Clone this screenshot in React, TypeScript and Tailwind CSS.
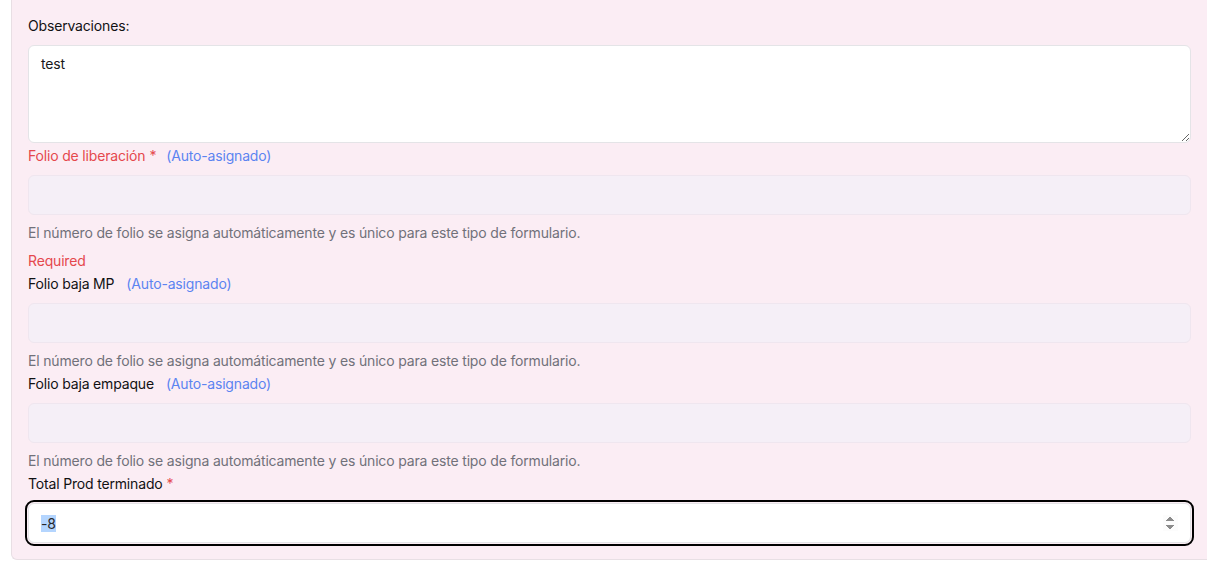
import React, { useEffect, useRef } from "react";

const font = { fontFamily: "Inter, 'Noto Sans', sans-serif", letterSpacing: "-0.17px" };

function HelpText() {
  return (
    <p className="text-sm leading-5 text-[#71717a]">
      El número de folio se asigna automáticamente y es único para este tipo de formulario.
    </p>
  );
}

function AutoField({
  label,
  required,
  error,
  showError,
}: {
  label: string;
  required?: boolean;
  error?: boolean;
  showError?: boolean;
}) {
  return (
    <div className="flex flex-col">
      <div className={`text-sm leading-5 ${error ? "text-[#e5484d]" : "text-[#111113]"}`}>
        {label}
        {required && <span className="ml-1 text-[#e5484d]">*</span>}
        <span className={`${required ? "ml-[10px]" : "ml-[12px]"} text-[#5b84f1]`}>(Auto-asignado)</span>
      </div>
      <input
        readOnly
        className="mt-[9px] h-10 w-full rounded-md border border-[#efe6ef] bg-[#f5eff7] px-3 text-sm outline-none"
      />
      <div className="mt-2">
        <HelpText />
      </div>
      {showError && <p className="mt-2 text-sm leading-5 text-[#e5484d]">Required</p>}
    </div>
  );
}

export default function App() {
  const ref = useRef<HTMLInputElement>(null);
  useEffect(() => {
    const el = ref.current;
    if (el) {
      el.focus();
      el.select();
    }
  }, []);

  return (
    <div className="h-[569px] w-[1207px] overflow-hidden bg-white" style={font}>
      <div className="ml-[11px] w-[1198px] rounded-bl-md border-b border-l border-[#e8dfe4] bg-[#fbedf4] pl-[16px] pr-[16px] pt-[16px] pb-[16px]">
        <div className="w-[1163px]">
          <label className="block text-sm leading-5 text-[#111113]">Observaciones:</label>
          <textarea
            defaultValue="test"
            className="mt-[9px] block h-[98px] w-full rounded-md border border-[#e4e4e7] bg-white px-3 py-[8px] text-sm leading-5 text-[#18181b] outline-none"
          />
          <div className="mt-[3px] flex flex-col gap-[3px]">
            <AutoField label="Folio de liberación" required error showError />
            <AutoField label="Folio baja MP" />
            <AutoField label="Folio baja empaque" />
            <div className="flex flex-col">
              <div className="text-sm leading-5 text-[#111113]">
                Total Prod terminado<span className="ml-1 text-[#e5484d]">*</span>
              </div>
              <input
                ref={ref}
                type="number"
                defaultValue={-8}
                className="mt-[9px] h-10 w-full rounded-md border border-[#e4e4e7] bg-white px-3 text-sm text-[#27272a] outline-2 outline-offset-1 outline-black selection:bg-[#b4d5fe] selection:text-[#27272a] focus:outline-2 focus:outline-offset-1 focus:outline-black"
              />
            </div>
          </div>
        </div>
      </div>
    </div>
  );
}
